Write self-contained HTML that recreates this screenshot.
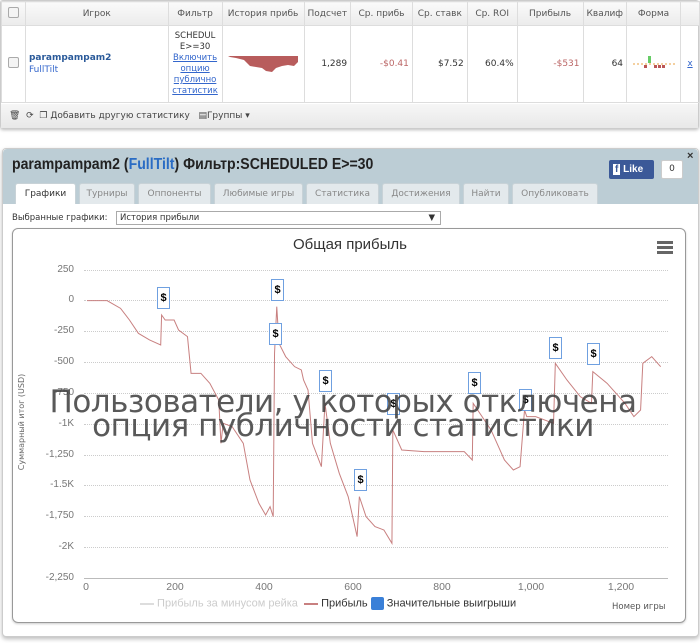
<!DOCTYPE html><html><head><meta charset="utf-8"><style>
*{box-sizing:border-box}body{margin:0;width:700px;height:643px;background:#fff;font-family:"DejaVu Sans","Liberation Sans",sans-serif;position:relative;overflow:hidden;color:#333}
.a{position:absolute}
table{border-collapse:collapse;position:absolute;left:1px;top:1px;font-size:9px}
td{border:1px solid #ddd;padding:0 3px}
.h td{height:24px;background:linear-gradient(#fafafa,#ebebeb);text-align:center;color:#555}
.cb{width:11px;height:11px;border:1px solid #aaa;border-radius:2px;background:#f4f4f4;display:inline-block}
.tab{position:absolute;top:183px;height:21px;background:#e3e9ec;border:1px solid #c8d2d7;border-bottom:none;border-radius:3px 3px 0 0;font-size:9px;color:#888;text-align:center;line-height:20px}
.yl{position:absolute;right:626px;font-size:10px;color:#777;font-family:"Liberation Sans",sans-serif}
.xl{position:absolute;top:581px;font-size:10.5px;color:#777;font-family:"Liberation Sans",sans-serif;transform:translateX(-50%)}
.g{position:absolute;left:84px;width:584px;border-top:1px dotted #ccc}
.m{position:absolute;width:13px;height:22px;border:1px solid #6fa0e0;background:#fff;font:bold 11px "Liberation Sans",sans-serif;text-align:center;line-height:20px;color:#000}
</style></head><body>
<div class="a" style="left:0;top:0;width:699px;height:129px;border:1px solid #ccc;border-radius:3px;box-shadow:0 1px 3px #bbb"></div>
<table>
<tr class="h"><td style="width:24px"><span class="cb"></span></td><td style="width:143px">Игрок</td><td style="width:54px">Фильтр</td><td style="width:82px">История прибь</td><td style="width:46px">Подсчет</td><td style="width:62px">Ср. прибь</td><td style="width:55px">Ср. ставк</td><td style="width:50px">Ср. ROI</td><td style="width:66px">Прибыль</td><td style="width:42px">Квалиф</td><td style="width:54px">Форма</td><td style="width:19px"></td></tr>
<tr style="height:77px;text-align:right"><td style="text-align:center"><span class="cb"></span></td><td style="text-align:left;color:#36c;line-height:12px"><b style="color:#2a5a9a">parampampam2</b><br>FullTilt</td><td style="text-align:center;line-height:11px;font-size:8.5px">SCHEDUL<br>E&gt;=30<br><u style="color:#36c">Включить<br>опцию<br>публично<br>статистик</u></td><td><svg width="74" height="20" style="display:block;margin:auto"><path d="M2 2 L72 2 L72 8 L68 12 L62 11 L56 12 L50 14 L46 18 L40 17 L36 14 L30 13 L24 12 L18 6 L10 4 L4 3Z" fill="#b85c5c"/></svg></td><td>1,289</td><td style="color:#b66">-$0.41</td><td>$7.52</td><td>60.4%</td><td style="color:#b66">-$531</td><td>64</td><td><svg width="46" height="14"><line x1="2" y1="8" x2="44" y2="8" stroke="#e8a040" stroke-dasharray="2 2"/><rect x="17" y="0" width="3" height="7" fill="#6c6"/><rect x="13" y="9" width="3" height="3" fill="#b55"/><rect x="23" y="9" width="3" height="3" fill="#b55"/><rect x="27" y="9" width="3" height="3" fill="#b55"/><rect x="31" y="9" width="3" height="3" fill="#b55"/></svg></td><td style="text-align:center;color:#36c"><u>x</u></td></tr>
</table>
<div class="a" style="left:1px;top:104px;width:697px;height:24px;background:linear-gradient(#f6f6f6,#e8e8e8);font-size:9px;color:#444;line-height:24px;padding-left:8px">🗑 &nbsp;⟳ &nbsp;❐ Добавить другую статистику &nbsp;&nbsp;▤Группы ▾</div>

<div class="a" style="left:2px;top:148px;width:697px;height:489px;border:1px solid #ccc;border-radius:4px;background:#fff;box-shadow:0 2px 4px #bbb"></div>
<div class="a" style="left:3px;top:149px;width:695px;height:55px;background:#bccdd5;border-radius:4px 4px 0 0"></div>
<div class="a" style="left:12px;top:156px;font:bold 16px 'Liberation Sans',sans-serif;color:#222;transform:scaleX(0.88);transform-origin:0 0;white-space:nowrap">parampampam2 (<span style="color:#2a6cc4">FullTilt</span>) Фильтр:SCHEDULED E&gt;=30</div>
<div class="a" style="left:609px;top:160px;width:45px;height:19px;background:#3b5998;border-radius:2px;color:#fff;font:bold 10px 'Liberation Sans',sans-serif;line-height:19px;padding-left:4px"><span style="background:#fff;color:#3b5998;padding:0 2px">f</span> Like</div>
<div class="a" style="left:661px;top:160px;width:22px;height:19px;background:#fff;border:1px solid #ccc;border-radius:2px;font-size:9px;text-align:center;line-height:17px">0</div>
<div class="a" style="left:687px;top:150px;font:bold 11px sans-serif">×</div>
<div class="tab" style="left:15px;width:61px;background:#fff;color:#333">Графики</div>
<div class="tab" style="left:79px;width:56px">Турниры</div>
<div class="tab" style="left:138px;width:73px">Оппоненты</div>
<div class="tab" style="left:214px;width:89px">Любимые игры</div>
<div class="tab" style="left:306px;width:73px">Статистика</div>
<div class="tab" style="left:382px;width:78px">Достижения</div>
<div class="tab" style="left:463px;width:46px">Найти</div>
<div class="tab" style="left:512px;width:86px">Опубликовать</div>
<div class="a" style="left:12px;top:213px;font-size:8.5px;color:#333">Выбранные графики:</div>
<div class="a" style="left:116px;top:211px;width:325px;height:14px;border:1px solid #aaa;font-size:8.5px;line-height:12px;padding-left:3px">История прибыли<span style="position:absolute;right:5px">▼</span></div>
<div class="a" style="left:12px;top:228px;width:674px;height:395px;border:1px solid #999;border-radius:6px;box-shadow:0 1px 2px #ccc"></div>
<div class="a" style="left:0;width:700px;top:236px;text-align:center;font:15px 'Liberation Sans',sans-serif;color:#333">Общая прибыль</div>
<div class="a" style="left:657px;top:241px;width:16px;height:3px;background:#666;box-shadow:0 5px #666,0 10px #666"></div>
<div class="g" style="top:270px"></div><div class="g" style="top:300px"></div><div class="g" style="top:331px"></div><div class="g" style="top:362px"></div><div class="g" style="top:393px"></div><div class="g" style="top:424px"></div><div class="g" style="top:455px"></div><div class="g" style="top:485px"></div><div class="g" style="top:516px"></div><div class="g" style="top:547px"></div>
<div class="a" style="left:84px;top:578px;width:584px;border-top:1px solid #bbb"></div>
<div class="yl" style="top:264px">250</div><div class="yl" style="top:294px">0</div><div class="yl" style="top:325px">-250</div><div class="yl" style="top:356px">-500</div><div class="yl" style="top:387px">-750</div><div class="yl" style="top:418px">-1K</div><div class="yl" style="top:449px">-1,250</div><div class="yl" style="top:479px">-1.5K</div><div class="yl" style="top:510px">-1,750</div><div class="yl" style="top:541px">-2K</div><div class="yl" style="top:572px">-2,250</div>
<div class="xl" style="left:86px">0</div><div class="xl" style="left:175px">200</div><div class="xl" style="left:264px">400</div><div class="xl" style="left:353px">600</div><div class="xl" style="left:442px">800</div><div class="xl" style="left:531px">1,000</div><div class="xl" style="left:621px">1,200</div>
<div class="a" style="transform:rotate(-90deg);transform-origin:0 0;font-size:8px;color:#666;width:120px;text-align:center;top:482px;left:17px">Суммарный итог (USD)</div>
<svg class="a" style="left:0;top:0" width="700" height="643"><g transform="translate(0,230) scale(0.4464,0.3333)"><polyline vector-effect="non-scaling-stroke" fill="none" stroke="#c88080" stroke-width="1" points="195,212 240,212 270,235 290,270 310,310 335,330 360,345 362,255 370,270 390,270 400,300 420,320 428,430 450,430 470,460 490,510 495,640 500,580 520,590 545,640 560,750 580,820 595,855 605,830 612,860 615,370 620,230 625,340 640,380 660,410 675,420 680,450 690,480 700,640 720,710 728,520 740,640 760,730 780,800 800,920 805,800 820,860 840,890 860,900 878,940 880,600 900,660 950,665 1000,665 1040,665 1058,690 1060,520 1100,600 1130,690 1150,720 1165,710 1175,540 1180,560 1200,560 1240,580 1244,400 1270,450 1300,500 1325,520 1328,425 1360,460 1380,490 1400,520 1420,560 1435,540 1440,400 1460,380 1480,410"/></g></svg>
<div class="m" style="left:157px;top:287px">$</div><div class="m" style="left:271px;top:279px">$</div><div class="m" style="left:269px;top:323px">$</div><div class="m" style="left:319px;top:370px">$</div><div class="m" style="left:387px;top:393px">$</div><div class="m" style="left:468px;top:372px">$</div><div class="m" style="left:519px;top:389px">$</div><div class="m" style="left:549px;top:337px">$</div><div class="m" style="left:587px;top:343px">$</div><div class="m" style="left:354px;top:469px">$</div>
<div class="a" style="left:0;width:686px;top:390px;text-align:center;font:31px 'DejaVu Sans',sans-serif;color:rgba(60,60,60,.85);line-height:24px;letter-spacing:-0.5px">Пользователи, у которых отключена<br>опция публичности статистики</div>
<div class="a" style="left:140px;top:597px;font:11px 'Liberation Sans',sans-serif;color:#ccc;white-space:nowrap"><span style="display:inline-block;width:14px;border-top:2px solid #ddd;vertical-align:middle"></span> Прибыль за минусом рейка &nbsp;<span style="display:inline-block;width:14px;border-top:2px solid #c88080;vertical-align:middle"></span> <span style="color:#333">Прибыль</span> <span style="display:inline-block;width:13px;height:13px;background:#3a80d8;border-radius:2px;vertical-align:middle"></span> <span style="color:#333">Значительные выигрыши</span></div>
<div class="a" style="left:612px;top:602px;font-size:8.5px;color:#555">Номер игры</div>
</body></html>
